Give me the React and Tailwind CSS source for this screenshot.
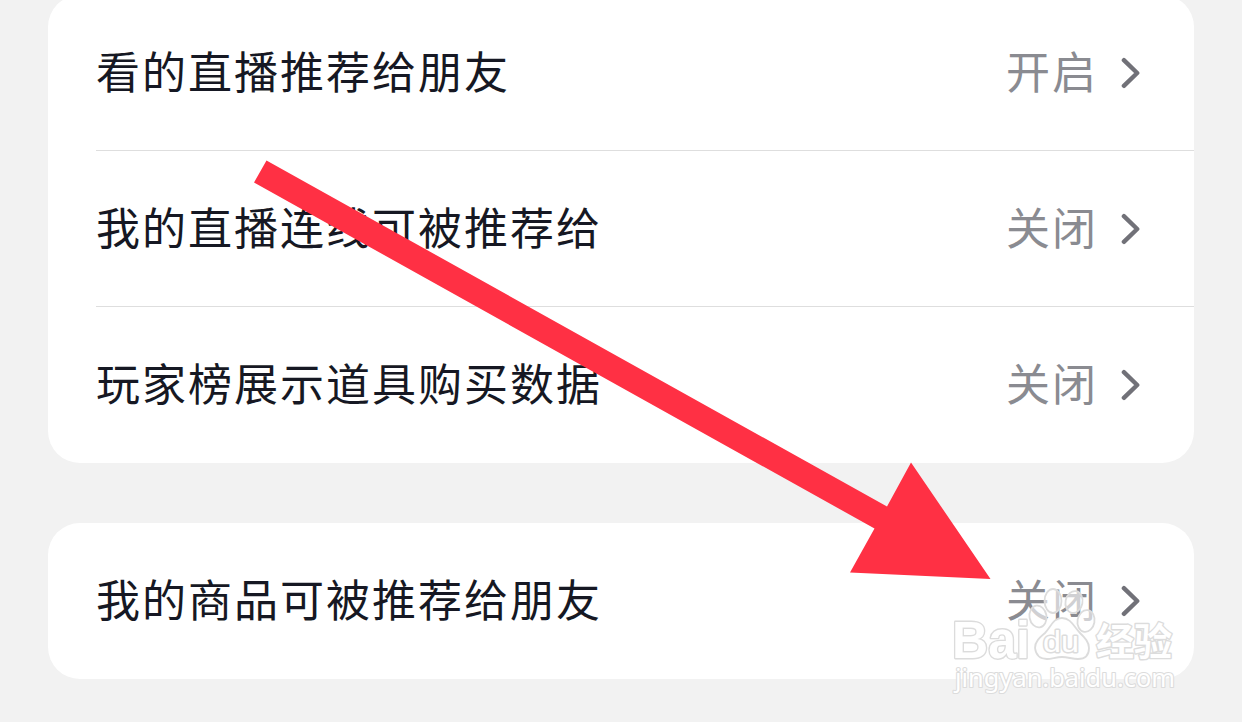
import React from "react";

function Chevron() {
  return (
    <svg className="ml-[24px] h-[32px] w-[20px] shrink-0" viewBox="0 0 20 32" fill="none" stroke="#717178" strokeWidth="4.4" strokeLinecap="round" strokeLinejoin="round">
      <path d="M3.9 3.2L17.2 16L3.9 28.8" />
    </svg>
  );
}

function Row({ label, value, divider }) {
  return (
    <div className="relative flex h-[156px] items-center justify-between pr-[54px]">
      <span className="pb-[6px] text-[44px] leading-[64px] tracking-[2px] text-[#161823]">{label}</span>
      <span className="flex items-center">
        <span className="-mr-[2px] pb-[6px] text-[44px] leading-[64px] tracking-[2px] text-[#8a8b91]">{value}</span>
        <Chevron />
      </span>
      {divider && <span className="absolute right-0 bottom-0 left-0 h-px bg-[#dedede]" />}
    </div>
  );
}

function Arrow() {
  return (
    <svg className="absolute top-0 left-0 h-[722px] w-[1242px]" viewBox="0 0 1242 722">
      <path d="M266.5 160.5L887 506.5L911 462.5L990.5 579L850 572.5L874.5 528.5L254 182.5Z" fill="#ff3044" />
    </svg>
  );
}

function Watermark() {
  return (
    <svg className="absolute top-[580px] left-[940px] h-[130px] w-[260px]" viewBox="940 580 260 130">
      <g fill="#fff" fillOpacity="0.6" stroke="#dcdcdc" strokeWidth="1.8">
        <ellipse cx="1038" cy="616.5" rx="8.5" ry="11" transform="rotate(-10 1038 616.5)" />
        <ellipse cx="1053" cy="601" rx="8.5" ry="12" />
        <ellipse cx="1074" cy="602" rx="8.5" ry="11" transform="rotate(12 1074 602)" />
        <ellipse cx="1086" cy="621" rx="8.5" ry="11" transform="rotate(10 1086 621)" />
        <path fillOpacity="0.95" d="M1062 618C1053 618 1051 627 1045 633C1039 638 1035 642 1035 648C1036 656 1041 659 1047 659C1052 659 1056 657 1062 657C1068 657 1072 659 1078 659C1084 659 1089 656 1089 648C1089 642 1085 638 1080 633C1074 627 1071 618 1062 618Z" />
      </g>
      <g fill="#fff" stroke="#dcdcdc" strokeWidth="2.8" strokeLinejoin="round" paintOrder="stroke">
        <text x="952" y="658" fontSize="51" fontWeight="700" textLength="78" lengthAdjust="spacingAndGlyphs" className="font-['Liberation_Sans',sans-serif]">Bai</text>
        <text x="1043" y="652" fontSize="29" fontWeight="400" textLength="36" lengthAdjust="spacingAndGlyphs" className="font-['Liberation_Sans',sans-serif]">du</text>
        <text x="1096" y="655" fontSize="38" fontWeight="700" textLength="76" lengthAdjust="spacingAndGlyphs" className="font-['Noto_Sans_CJK_SC',sans-serif]">经验</text>
        <text x="955" y="687" fontSize="25" fontWeight="400" strokeWidth="2.2" textLength="220" lengthAdjust="spacingAndGlyphs" className="font-['Noto_Sans',sans-serif]">jingyan.baidu.com</text>
      </g>
    </svg>
  );
}

export default function App() {
  return (
    <main className="relative h-[722px] w-[1242px] overflow-hidden bg-[#f2f2f2] font-['Noto_Sans_CJK_SC',sans-serif]">
      <div className="-mt-[5px] flex flex-col gap-[60px] px-[48px]">
        <section className="rounded-[32px] bg-white pl-[48px]">
          <Row label="看的直播推荐给朋友" value="开启" divider />
          <Row label="我的直播连线可被推荐给" value="关闭" divider />
          <Row label="玩家榜展示道具购买数据" value="关闭" />
        </section>
        <section className="rounded-[32px] bg-white pl-[48px]">
          <Row label="我的商品可被推荐给朋友" value="关闭" />
        </section>
      </div>
      <Arrow />
      <Watermark />
    </main>
  );
}
